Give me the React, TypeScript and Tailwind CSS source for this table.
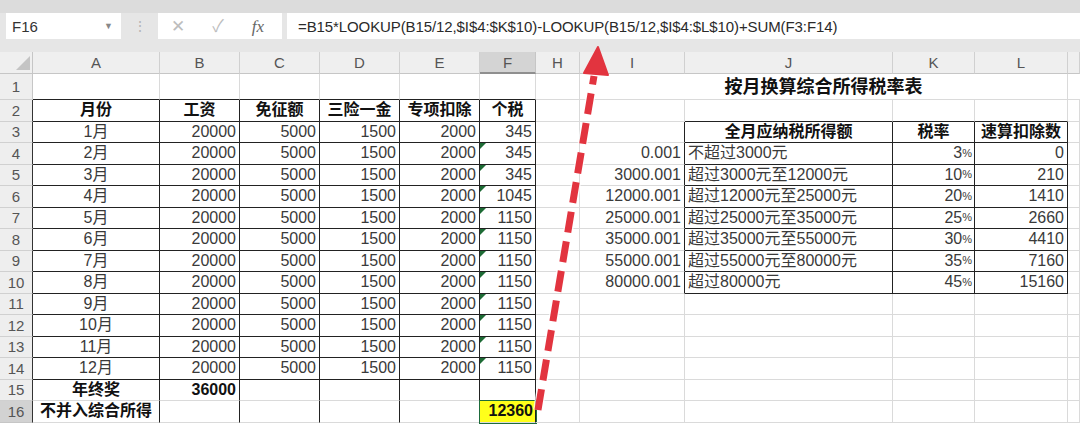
import React from "react"

type Cell = { t?: string; align?: "l" | "c" | "r"; bold?: boolean; pct?: boolean; yellow?: boolean; tri?: boolean }

const COLS = [
  { k: "A", w: "w-[127px]" },
  { k: "B", w: "w-[80px]" },
  { k: "C", w: "w-[80px]" },
  { k: "D", w: "w-[80px]" },
  { k: "E", w: "w-[80px]" },
  { k: "F", w: "w-[56px]" },
  { k: "H", w: "w-[44px]" },
  { k: "I", w: "w-[105px]" },
  { k: "J", w: "w-[208px]" },
  { k: "K", w: "w-[82px]" },
  { k: "L", w: "w-[93px]" },
  { k: "", w: "flex-1" },
]

const TAX = ["345", "345", "345", "1045", "1150", "1150", "1150", "1150", "1150", "1150", "1150", "1150"]

const BRACKETS = [
  ["0.001", "不超过3000元", "3", "0"],
  ["3000.001", "超过3000元至12000元", "10", "210"],
  ["12000.001", "超过12000元至25000元", "20", "1410"],
  ["25000.001", "超过25000元至35000元", "25", "2660"],
  ["35000.001", "超过35000元至55000元", "30", "4410"],
  ["55000.001", "超过55000元至80000元", "35", "7160"],
  ["80000.001", "超过80000元", "45", "15160"],
]

const HEAD = ["月份", "工资", "免征额", "三险一金", "专项扣除", "个税"]

function rowCells(r: number): Cell[] {
  const cells: Cell[] = COLS.map(() => ({}))
  if (r === 2) HEAD.forEach((h, i) => (cells[i] = { t: h, align: "c", bold: true }))
  if (r >= 3 && r <= 14) {
    const m = r - 2
    cells[0] = { t: `${m}月`, align: "c" }
    cells[1] = { t: "20000", align: "r" }
    cells[2] = { t: "5000", align: "r" }
    cells[3] = { t: "1500", align: "r" }
    cells[4] = { t: "2000", align: "r" }
    cells[5] = { t: TAX[m - 1], align: "r", tri: r >= 4 }
  }
  if (r === 3) {
    cells[8] = { t: "全月应纳税所得额", align: "c", bold: true }
    cells[9] = { t: "税率", align: "c", bold: true }
    cells[10] = { t: "速算扣除数", align: "c", bold: true }
  }
  if (r >= 4 && r <= 10) {
    const b = BRACKETS[r - 4]
    cells[7] = { t: b[0], align: "r" }
    cells[8] = { t: b[1], align: "l" }
    cells[9] = { t: b[2], align: "r", pct: true }
    cells[10] = { t: b[3], align: "r" }
  }
  if (r === 15) {
    cells[0] = { t: "年终奖", align: "c", bold: true }
    cells[1] = { t: "36000", align: "r", bold: true }
  }
  if (r === 16) {
    cells[0] = { t: "不并入综合所得", align: "c", bold: true }
    cells[5] = { t: "12360", align: "r", bold: true, yellow: true }
  }
  return cells
}

// black table borders
const box = (r: number, c: number) => (r >= 2 && r <= 14 && c >= 0 && c <= 5) || (r >= 3 && r <= 10 && c >= 8 && c <= 10)
const vOnly = (r: number, c: number) => r >= 15 && r <= 16 && c >= 0 && c <= 5

function Row({ r }: { r: number }) {
  const cells = rowCells(r)
  const h = r === 1 ? "h-[26px]" : "h-[21.5px]"
  return (
    <div className={`flex ${h}`}>
      <div
        className={`w-[33px] shrink-0 flex items-center justify-center border-r border-b text-[15px] text-[#555] ${
          r === 16 ? "bg-[#d2d2d2] border-b-[#c6c6c6]" : "bg-[#eeeeee] border-b-[#d0d0d0]"
        } ${r >= 2 ? "border-r-[#333]" : "border-r-[#c6c6c6]"}`}
      >
        {r}
      </div>
      {r === 1 ? (
        <>
          {COLS.slice(0, 7).map((col, c) => (
            <div
              key={col.k}
              className={`${col.w} shrink-0 border-r border-b border-r-[#dadada] ${box(2, c) ? "border-b-[#222]" : "border-b-[#dadada]"}`}
            />
          ))}
          <div className="w-[488px] shrink-0 border-r border-b border-r-[#dadada] border-b-[#dadada] flex items-center justify-center text-[18px] font-bold text-[#111]">
            按月换算综合所得税率表
          </div>
          <div className="flex-1 border-b border-b-[#dadada]" />
        </>
      ) : (
        cells.map((cell, c) => {
          const rBlack = box(r, c) || box(r, c + 1) || vOnly(r, c) || vOnly(r, c + 1)
          const bBlack = box(r, c) || box(r + 1, c)
          const just = cell.align === "c" ? "justify-center" : cell.align === "r" ? "justify-end" : "justify-start"
          return (
            <div
              key={c}
              className={`${COLS[c].w} shrink-0 relative flex items-center whitespace-nowrap border-r border-b ${just} ${
                cell.yellow ? "px-[2px]" : "px-[3px]"
              } ${rBlack ? "border-r-[#222]" : "border-r-[#dadada]"} ${bBlack ? "border-b-[#222]" : "border-b-[#dadada]"} ${
                cell.bold ? "font-bold text-[#111]" : "text-[#3a3a3a]"
              } ${cell.yellow ? "bg-[#ffff1a] outline-1 outline-[#1e6b3c]" : ""}`}
            >
              {cell.tri && (
                <span className="absolute top-0 left-0 w-0 h-0 border-t-[6px] border-r-[6px] border-t-[#1d6b35] border-r-transparent" />
              )}
              {cell.t}
              {cell.pct && <span className="text-[11px] tracking-[-1px]">%</span>}
            </div>
          )
        })
      )}
    </div>
  )
}

export default function App() {
  return (
    <div
      className="relative w-[1080px] h-[424px] overflow-hidden bg-white text-[16px] leading-none"
      style={{ fontFamily: '"Liberation Sans", "Noto Sans CJK SC", sans-serif' }}
    >
      {/* formula bar */}
      <div className="h-[52px] bg-[#e6e6e6] flex flex-col">
        <div className="h-[13px] bg-[#dcdcdc]" />
        <div className="h-[26px] flex items-stretch">
          <div className="ml-[6px] w-[115px] bg-white flex items-center justify-between pl-[6px] pr-[8px]">
            <span className="text-[15px] text-[#333]">F16</span>
            <span className="text-[9px] text-[#888]">▼</span>
          </div>
          <div className="w-[37px] flex items-center justify-center text-[#b5b5b5] text-[14px]">⋮</div>
          <div className="w-[124px] bg-white flex items-center text-[#bdbdbd]">
            <span className="w-[40px] text-center text-[17px]">✕</span>
            <span className="w-[40px] text-center text-[17px]">✓</span>
            <span className="w-[40px] text-center text-[17px] italic text-[#666] font-['Liberation_Serif',serif]">fx</span>
          </div>
          <div className="ml-[5px] flex-1 bg-white flex items-center pl-[11px] text-[15px] tracking-[-0.1px] text-[#2a2a2a]">
            =B15*LOOKUP(B15/12,$I$4:$K$10)-LOOKUP(B15/12,$I$4:$L$10)+SUM(F3:F14)
          </div>
        </div>
      </div>

      {/* column headers */}
      <div className="flex h-[22px] bg-[#efefef] text-[15px] text-[#555]">
        <div className="relative w-[33px] shrink-0 border-r border-b border-[#c6c6c6]">
          <span className="absolute right-[2px] bottom-[3px] w-0 h-0 border-l-[14px] border-l-transparent border-b-[14px] border-b-[#c4c4c4]" />
        </div>
        {COLS.map((col) => (
          <div
            key={col.k}
            className={`${col.w} shrink-0 flex items-center justify-center border-r border-b ${
              col.k === "F" ? "bg-[#d4d4d4] border-b-2 border-b-[#8f8f8f] border-r-[#c6c6c6]" : "border-[#d0d0d0] border-b-[#c6c6c6]"
            }`}
          >
            {col.k}
          </div>
        ))}
      </div>

      {Array.from({ length: 16 }, (_, i) => (
        <Row key={i} r={i + 1} />
      ))}

      {/* red dashed arrow */}
      <svg className="absolute inset-0 pointer-events-none" width="1080" height="424" viewBox="0 0 1080 424">
        <line x1="538" y1="410" x2="594" y2="76" stroke="#ffffff" strokeOpacity="0.7" strokeWidth="10" strokeDasharray="21 9" />
        <line x1="538" y1="410" x2="594" y2="76" stroke="#e2343f" strokeWidth="7" strokeDasharray="21 9" />
        <polygon points="598,47 584,73 608,75" fill="#e2343f" stroke="#e2343f" strokeWidth="2" strokeLinejoin="round" />
      </svg>
    </div>
  )
}
